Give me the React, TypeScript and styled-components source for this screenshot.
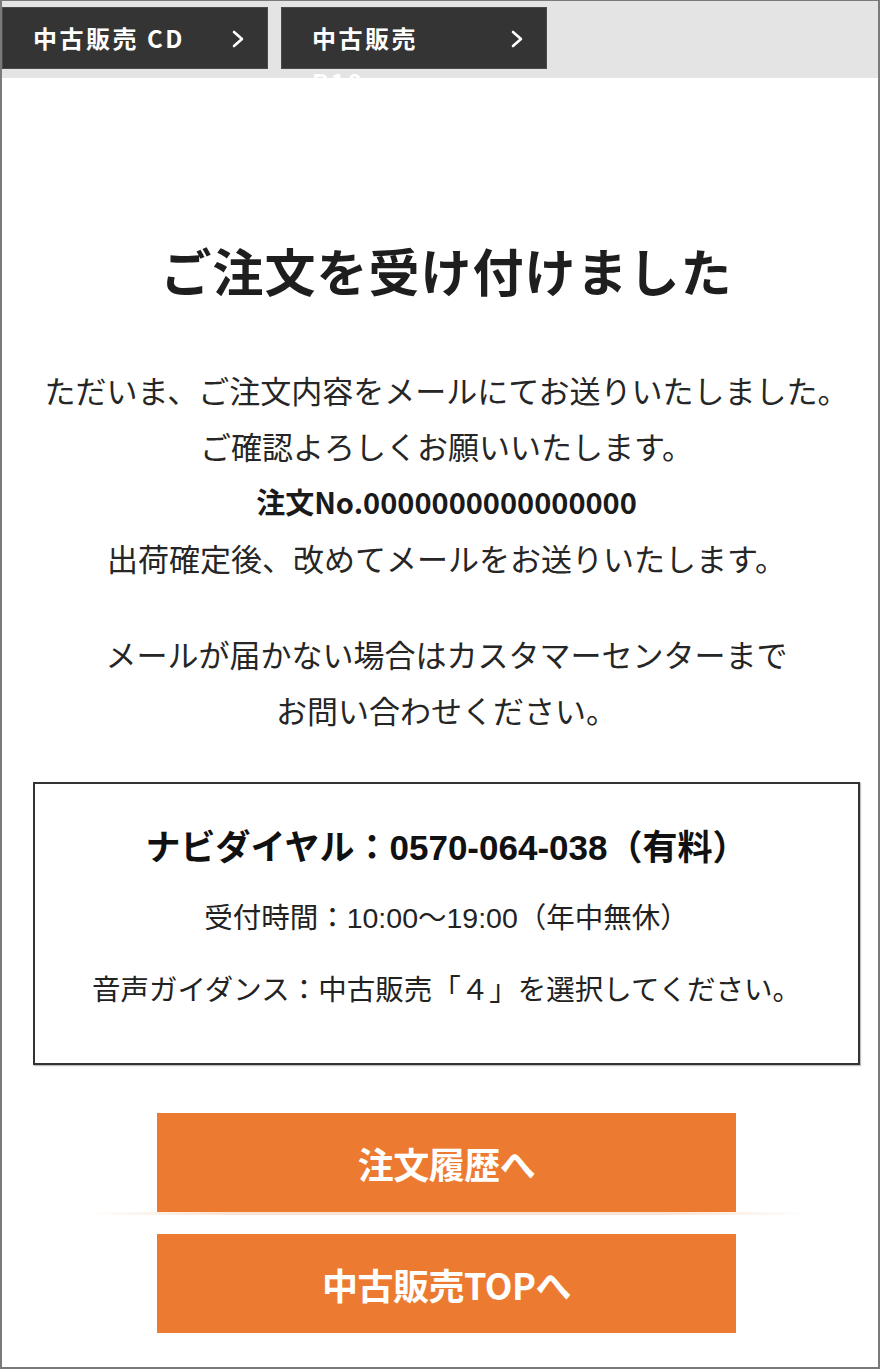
import styled, { createGlobalStyle } from 'styled-components';

const GlobalStyle = createGlobalStyle`
  html, body {
    margin: 0;
    padding: 0;
    background: #fff;
  }
  body {
    font-family: "Noto Sans CJK JP", "Noto Sans", sans-serif;
    color: #222;
  }
`;

const Frame = styled.div`
  box-sizing: border-box;
  width: 880px;
  height: 1369px;
  border: 2px solid #7a7a7a;
  border-top-width: 1px;
  background: #fff;
  overflow: hidden;
`;

const TabBar = styled.nav`
  display: flex;
  gap: 13px;
  height: 77px;
  padding-top: 6px;
  box-sizing: border-box;
  background: #e4e4e4;
`;

const Tab = styled.a`
  box-sizing: border-box;
  display: flex;
  justify-content: space-between;
  align-items: flex-start;
  width: 266px;
  height: 62px;
  padding: 8px 22px 0 30px;
  background: #343434;
  border: 1px solid #4a4a4a;
  color: #fff;
  font-size: 24px;
  font-weight: 700;
  letter-spacing: 2.5px;
  line-height: 44px;
  text-decoration: none;
  overflow: visible;
`;

const TabLabel = styled.span`
  white-space: nowrap;
`;

const Chevron = styled.svg`
  margin-top: 14px;
  flex-shrink: 0;
`;

const Main = styled.main`
  display: flex;
  flex-direction: column;
  align-items: center;
  padding: 0 18px 0 31px;
`;

const Title = styled.h1`
  margin: 162px 0 0;
  font-size: 51px;
  font-weight: 700;
  line-height: 60px;
  color: #1e1e1e;
  letter-spacing: 1px;
`;

const Message = styled.p<{ $gap: number }>`
  margin: ${(p) => p.$gap}px 0 0;
  font-size: 31px;
  line-height: 55.5px;
  text-align: center;
  color: #262626;
  white-space: nowrap;
`;

const OrderNo = styled.strong`
  font-weight: 700;
  font-size: 29px;
  color: #1a1a1a;
`;

const ContactBox = styled.section`
  box-sizing: border-box;
  align-self: stretch;
  height: 283px;
  margin-top: 45px;
  padding-top: 44px;
  border: 2px solid #333;
  box-shadow: 1px 1px 1px rgba(0, 0, 0, 0.25);
  text-align: center;
`;

const Dial = styled.div`
  font-family: "Liberation Sans", "Noto Sans CJK JP", sans-serif;
  font-size: 35px;
  font-weight: 700;
  line-height: 40px;
  color: #111;
`;

const Info = styled.div<{ $top: number }>`
  margin-top: ${(p) => p.$top}px;
  font-family: "Liberation Sans", "Noto Sans CJK JP", sans-serif;
  font-size: 28.5px;
  line-height: 36px;
  color: #222;
  white-space: nowrap;
`;

const Buttons = styled.div`
  display: flex;
  flex-direction: column;
  align-items: center;
  margin-top: 48px;
`;

const OrangeButton = styled.a`
  display: flex;
  align-items: center;
  justify-content: center;
  width: 579px;
  height: 99px;
  background: #ec7b31;
  color: #fff;
  font-size: 36px;
  font-weight: 700;
  text-decoration: none;
  letter-spacing: -0.5px;
`;

const Glow = styled.div`
  width: 720px;
  height: 3px;
  margin-bottom: 19px;
  background: linear-gradient(
    to right,
    rgba(250, 230, 215, 0) 0%,
    rgba(248, 224, 205, 0.9) 20%,
    rgba(248, 224, 205, 0.9) 80%,
    rgba(250, 230, 215, 0) 100%
  );
`;

const ChevronIcon = () => (
  <Chevron width="14" height="18" viewBox="0 0 14 18">
    <path d="M3 2 L11 9 L3 16" fill="none" stroke="#fff" strokeWidth="2.6" strokeLinecap="round" strokeLinejoin="round" />
  </Chevron>
);

export default function App() {
  return (
    <>
      <GlobalStyle />
      <Frame>
        <TabBar>
          <Tab href="#">
            <TabLabel>中古販売 CD</TabLabel>
            <ChevronIcon />
          </Tab>
          <Tab href="#">
            <TabLabel>
              中古販売
              <br />
              R18
            </TabLabel>
            <ChevronIcon />
          </Tab>
        </TabBar>
        <Main>
          <Title>ご注文を受け付けました</Title>
          <Message $gap={62}>
            ただいま、ご注文内容をメールにてお送りいたしました。
            <br />
            ご確認よろしくお願いいたします。
            <br />
            <OrderNo>注文No.0000000000000000</OrderNo>
            <br />
            出荷確定後、改めてメールをお送りいたします。
          </Message>
          <Message $gap={41}>
            メールが届かない場合はカスタマーセンターまで
            <br />
            お問い合わせください。
          </Message>
          <ContactBox>
            <Dial>ナビダイヤル：0570-064-038（有料）</Dial>
            <Info $top={32}>受付時間：10:00〜19:00（年中無休）</Info>
            <Info $top={36}>音声ガイダンス：中古販売「４」を選択してください。</Info>
          </ContactBox>
          <Buttons>
            <OrangeButton href="#">注文履歴へ</OrangeButton>
            <Glow />
            <OrangeButton href="#">中古販売TOPへ</OrangeButton>
          </Buttons>
        </Main>
      </Frame>
    </>
  );
}
